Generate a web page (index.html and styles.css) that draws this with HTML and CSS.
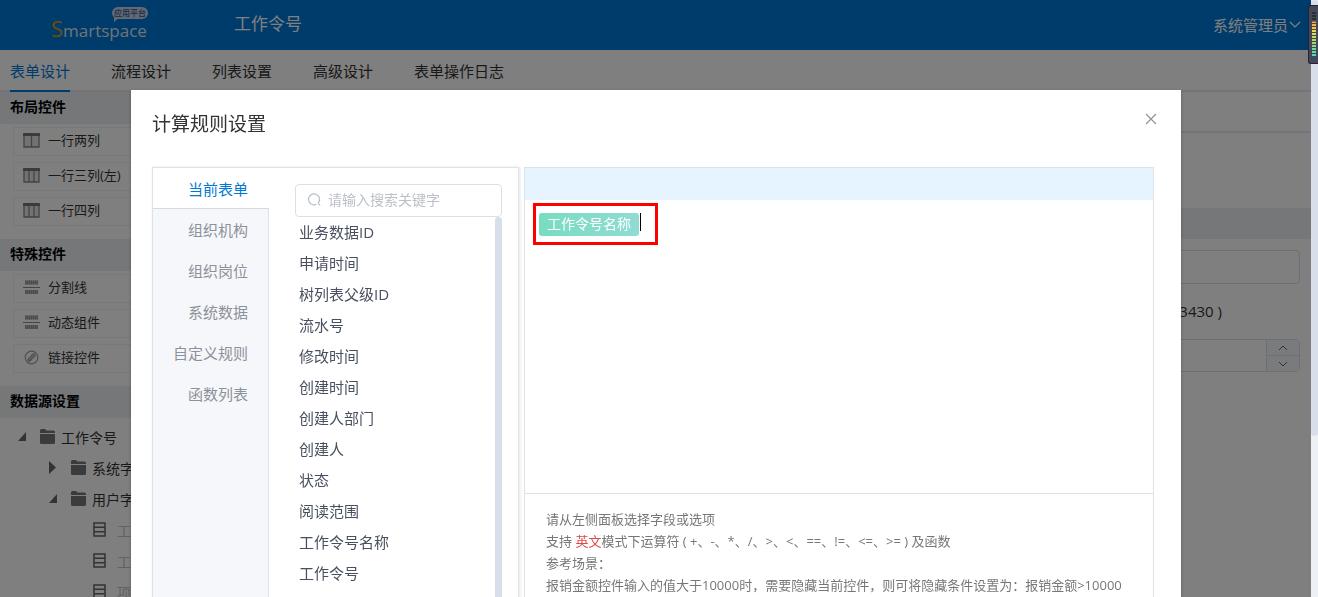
FILE: index.html
```
<!DOCTYPE html>
<html lang="zh-CN">
<head>
    <meta charset="UTF-8" />
    <meta name="viewport" content="width=device-width, initial-scale=1" />
    <title>工作令号</title>
    <link rel="stylesheet" href="styles.css">
</head>
<body>
    <!-- shared icons -->
    <svg width="0" height="0" class="sprite">
        <symbol id="cols2" viewBox="0 0 17 15"><path d="M1 1h15v13H1zM8.500 3v11" fill="#e4e4e4" stroke="#888" stroke-width="1.300"/><path d="M0 1q0-1 1-1h15q1 0 1 1v2H0z" fill="#777"/></symbol>
        <symbol id="cols3" viewBox="0 0 17 15"><path d="M1 1h15v13H1zM6 3v11M11 3v11" fill="#e4e4e4" stroke="#888" stroke-width="1.300"/><path d="M0 1q0-1 1-1h15q1 0 1 1v2H0z" fill="#777"/></symbol>
        <symbol id="split" viewBox="0 0 17 15"><path d="M2 2.500h13M2 12h13" stroke="#b0b0b0" stroke-width="4"/><path d="M2 2.500h13M2 12h13" stroke="#989898" stroke-width="4" stroke-dasharray="1 1"/><path d="M0 7.500h17" stroke="#888" stroke-width="1"/></symbol>
        <symbol id="link" viewBox="0 0 17 15"><circle cx="8.500" cy="7.500" r="6.300" fill="none" stroke="#a2a2a2" stroke-width="1.200"/><path d="M6.300 9.800l1.200-1.200M9.500 6.500l1.200-1.200" stroke="#a2a2a2" stroke-width="4" stroke-linecap="round"/><path d="M6 10l5-5" stroke="#d8d8d8" stroke-width="1"/></symbol>
        <symbol id="folder" viewBox="0 0 15 15"><path d="M0 1.500Q0 0 1.500 0H5l1.500 1.500h7Q15 1.500 15 3v1H0z" fill="#777"/><path d="M0 5h15v8.500q0 1.500-1.500 1.500h-12Q0 15 0 13.500z" fill="#777"/></symbol>
        <symbol id="open" viewBox="0 0 8 9"><path d="M8 0v9H0z" fill="#666"/></symbol>
        <symbol id="closed" viewBox="0 0 8 13"><path d="M0 0l7 6.500L0 13z" fill="#666"/></symbol>
        <symbol id="field" viewBox="0 0 13 15"><path d="M1 1h11v13H1zM1 5.300h11M1 9.700h11" fill="none" stroke="#666" stroke-width="1.500"/></symbol>
    </svg>

    <div class="page">
        <header class="topbar">
            <div class="logo"><span class="logo-s">S</span>martspace<span class="logo-tag">应用平台</span></div>
            <div class="app-name">工作令号</div>
            <button type="button" class="user">系统管理员<svg width="12" height="7" viewBox="0 0 12 7"><path d="M1 1l5 5 5-5" fill="none" stroke="currentColor" stroke-width="1.200"/></svg></button>
        </header>
        <nav class="tabs">
            <a href="#form" class="active">表单设计</a>
            <a href="#flow">流程设计</a>
            <a href="#list">列表设置</a>
            <a href="#advanced">高级设计</a>
            <a href="#log">表单操作日志</a>
        </nav>
        <div class="workspace">
            <aside class="sidebar">
                <h2>布局控件</h2>
                <ul class="widgets">
                    <li><svg><use href="#cols2"/></svg>一行两列</li>
                    <li><svg><use href="#cols3"/></svg>一行三列(左)</li>
                    <li><svg><use href="#cols3"/></svg>一行四列</li>
                </ul>
                <h2>特殊控件</h2>
                <ul class="widgets">
                    <li><svg><use href="#split"/></svg>分割线</li>
                    <li><svg><use href="#split"/></svg>动态组件</li>
                    <li><svg><use href="#link"/></svg>链接控件</li>
                </ul>
                <h2>数据源设置</h2>
                <ul class="tree">
                    <li><svg class="arrow"><use href="#open"/></svg><svg class="folder"><use href="#folder"/></svg>工作令号</li>
                    <li class="level2"><svg class="arrow tall"><use href="#closed"/></svg><svg class="folder"><use href="#folder"/></svg>系统字段</li>
                    <li class="level2"><svg class="arrow"><use href="#open"/></svg><svg class="folder"><use href="#folder"/></svg>用户字段</li>
                    <li class="level3"><svg class="field"><use href="#field"/></svg>工作令号</li>
                    <li class="level3"><svg class="field"><use href="#field"/></svg>工作令号名称</li>
                    <li class="level3"><svg class="field"><use href="#field"/></svg>项目</li>
                </ul>
            </aside>
            <main class="props">
                <div class="props-bar"></div>
                <div class="props-title"></div>
                <div class="props-body">
                    <input type="text" class="prop-input" aria-label="名称">
                    <p class="prop-note">3430 )</p>
                    <div class="stepper">
                        <input type="text" aria-label="数值">
                        <div class="stepper-btns">
                            <button type="button" aria-label="增加"><svg width="10" height="6" viewBox="0 0 10 6"><path d="M1 5l4-4 4 4" fill="none" stroke="currentColor"/></svg></button>
                            <button type="button" aria-label="减少"><svg width="10" height="6" viewBox="0 0 10 6"><path d="M1 1l4 4 4-4" fill="none" stroke="currentColor"/></svg></button>
                        </div>
                    </div>
                </div>
            </main>
        </div>
    </div>

    <div class="mask">
        <section class="dialog" role="dialog" aria-labelledby="dialogTitle">
            <div class="dialog-head">
                <h1 id="dialogTitle">计算规则设置</h1>
                <button type="button" class="close" aria-label="关闭"><svg width="12" height="12" viewBox="0 0 12 12"><path d="M1 1l10 10M11 1L1 11" fill="none" stroke="currentColor" stroke-width="1.200"/></svg></button>
            </div>
            <div class="dialog-body">
                <div class="source">
                    <div class="source-tabs">
                        <button type="button" class="active">当前表单</button>
                        <button type="button">组织机构</button>
                        <button type="button">组织岗位</button>
                        <button type="button">系统数据</button>
                        <button type="button">自定义规则</button>
                        <button type="button">函数列表</button>
                    </div>
                    <div class="source-pane">
                        <label class="search">
                            <svg width="15" height="15" viewBox="0 0 15 15"><path d="M9.500 12.300A5.500 5.500 0 1 1 11.200 11l2 2.500" fill="none" stroke="#b4bac4" stroke-width="1.100"/></svg>
                            <input type="text" placeholder="请输入搜索关键字" aria-label="搜索">
                        </label>
                        <div class="field-box">
                            <ul class="fields">
                                <li>业务数据ID</li>
                                <li>申请时间</li>
                                <li>树列表父级ID</li>
                                <li>流水号</li>
                                <li>修改时间</li>
                                <li>创建时间</li>
                                <li>创建人部门</li>
                                <li>创建人</li>
                                <li>状态</li>
                                <li>阅读范围</li>
                                <li>工作令号名称</li>
                                <li>工作令号</li>
                            </ul>
                            <div class="field-scroll"></div>
                        </div>
                    </div>
                </div>
                <div class="rule">
                    <div class="rule-bar"></div>
                    <div class="editor">
                        <div class="highlight"><span class="chip">工作令号名称</span><span class="caret"></span></div>
                    </div>
                    <div class="hint">
                        <p>请从左侧面板选择字段或选项</p>
                        <p>支持 <em>英文</em>模式下运算符 ( +、-、*、/、&gt;、&lt;、==、!=、&lt;=、&gt;= ) 及函数</p>
                        <p>参考场景：</p>
                        <p>报销金额控件输入的值大于10000时，需要隐藏当前控件，则可将隐藏条件设置为：报销金额&gt;10000</p>
                    </div>
                </div>
            </div>
        </section>
    </div>

    <div class="rail"><div class="rail-thumb"></div></div>
    <div class="meter"><div class="meter-bars"></div></div>
</body>
</html>
```
FILE: styles.css
```
* {
    box-sizing: border-box;
}
body {
    margin: 0;
    height: 100vh;
    overflow: hidden;
    background: #fff;
    font-family: "Open Sans", "Noto Sans CJK SC", sans-serif;
    font-size: 14px;
    color: #333;
}
h1, h2, p, ul {
    margin: 0;
    padding: 0;
}
ul {
    list-style: none;
}
button, input {
    font: inherit;
    color: inherit;
    background: none;
    border: none;
    padding: 0;
    outline: none;
}
svg {
    flex: none;
}
.sprite {
    position: absolute;
}

/* page behind the dialog */
.page {
    margin-right: 7px;
}
.topbar {
    display: flex;
    align-items: center;
    height: 50px;
    padding: 0 10px 0 51px;
    background: #0078d7;
    color: #fff;
}
.logo {
    position: relative;
    width: 183px;
    padding-top: 8px;
    font-size: 17px;
    font-weight: 500;
    line-height: 26px;
    color: #dde6f2;
}
.logo-s {
    color: #d89a10;
    font-size: 22px;
}
.logo-tag {
    position: absolute;
    top: 0;
    left: 61px;
    padding: 0 2px;
    border-radius: 6px;
    background: #c8d2e2;
    color: #2a5c9c;
    font-size: 8px;
    line-height: 12px;
    white-space: nowrap;
}
.logo-tag::after {
    content: "";
    position: absolute;
    left: 2px;
    top: 10px;
    border-top: 5px solid #c8d2e2;
    border-right: 6px solid transparent;
}
.app-name {
    flex: 1;
    font-size: 17px;
    line-height: 24px;
    padding-bottom: 2px;
}
.user {
    display: flex;
    align-items: center;
    gap: 1px;
    padding-bottom: 2px;
    font-size: 15px;
}
.tabs {
    display: flex;
    gap: 41px;
    height: 42px;
    padding: 0 10px;
    border-bottom: 2px solid #e8eaf2;
}
.tabs a {
    height: 42px;
    font-size: 15px;
    line-height: 42px;
    color: #333;
    text-decoration: none;
}
.tabs a.active {
    color: #0078d7;
    border-bottom: 2px solid #0078d7;
}
.workspace {
    display: flex;
}
.sidebar {
    width: 262px;
}
.sidebar h2 {
    height: 32px;
    padding-left: 10px;
    background: #ebeff3;
    color: #000;
    font-size: 14px;
    line-height: 30px;
}
.widgets {
    display: grid;
    gap: 6px;
    padding: 3px 10px 13px 13px;
}
.widgets li {
    display: flex;
    align-items: center;
    gap: 8px;
    height: 29px;
    padding-left: 9px;
    border: 1px solid #f0f0f0;
    font-size: 13px;
    line-height: 25px;
    padding-bottom: 2px;
}
.widgets svg {
    width: 17px;
    height: 15px;
}
.tree {
    padding-top: 3px;
}
.tree li {
    display: flex;
    align-items: center;
    height: 31px;
    padding-left: 18px;
    white-space: nowrap;
}
.tree .level2 {
    padding-left: 49px;
}
.tree .level3 {
    padding-left: 93px;
    color: #c4c4c4;
}
.arrow {
    width: 8px;
    height: 9px;
    margin-right: 14px;
}
.tall {
    height: 13px;
}
.folder {
    width: 15px;
    height: 15px;
    margin-right: 6px;
}
.field {
    width: 13px;
    height: 15px;
    margin-right: 11px;
}
.props {
    flex: 1;
}
.props-bar {
    height: 41px;
    border-bottom: 2px solid #e8eaf2;
}
.props-title {
    height: 31px;
    margin-top: 75px;
    background: #ebeff3;
}
.props-body {
    padding: 11px;
}
.prop-input {
    display: block;
    width: 100%;
    height: 34px;
    border: 1px solid #dcdfe6;
    border-radius: 4px;
}
.prop-note {
    padding-right: 78px;
    font-size: 15px;
    line-height: 55px;
    text-align: right;
}
.stepper {
    display: flex;
    height: 33px;
    border: 1px solid #dcdfe6;
    border-radius: 4px;
}
.stepper input {
    flex: 1;
}
.stepper-btns {
    display: flex;
    flex-direction: column;
    width: 33px;
    border-left: 1px solid #dcdfe6;
    background: #f5f7fa;
    color: #606266;
}
.stepper-btns button {
    display: flex;
    flex: 1;
    align-items: center;
    justify-content: center;
}
.stepper-btns button + button {
    border-top: 1px solid #dcdfe6;
}

/* dialog */
.mask {
    position: fixed;
    top: 0;
    bottom: 0;
    left: 0;
    right: 7px;
    overflow: hidden;
    background: rgba(0, 0, 0, 0.5);
}
.dialog {
    margin: 90px 130px 0 131px;
    padding: 20px 27px 40px 21px;
    background: #fff;
    box-shadow: 0 1px 3px rgba(0, 0, 0, 0.3);
}
.dialog-head {
    display: flex;
    justify-content: space-between;
    align-items: flex-start;
    height: 57px;
}
.dialog-head h1 {
    font-size: 19px;
    font-weight: normal;
    line-height: 28px;
}
.close {
    display: flex;
    padding: 3px 0;
    margin-right: -3px;
    color: #909399;
}
.dialog-body {
    display: flex;
    gap: 5px;
}
.source {
    display: flex;
    width: 367px;
    border: 1px solid #dfe3e8;
    box-shadow: 1px 0 3px rgba(0, 0, 0, 0.1);
}
.source-tabs {
    width: 116px;
    border-right: 1px solid #dde3ea;
    background: #f5f7fb;
}
.source-tabs button {
    display: block;
    width: 115px;
    height: 41px;
    padding-right: 20px;
    color: #8d9199;
    font-size: 15px;
    text-align: right;
}
.source-tabs .active {
    width: 116px;
    padding-right: 21px;
    border-bottom: 1px solid #d3dce6;
    background: #fff;
    color: #0078d7;
}
.source-pane {
    display: flex;
    flex: 1;
    flex-direction: column;
    padding: 16px 16px 0 26px;
}
.search {
    display: flex;
    align-items: center;
    gap: 6px;
    height: 33px;
    padding: 0 11px 2px;
    border: 1px solid #dcdfe6;
    border-radius: 4px;
}
.search input {
    width: 100%;
}
.search input::placeholder {
    color: #bbc0c9;
}
.field-box {
    display: flex;
    flex: 1;
}
.fields {
    flex: 1;
    padding-left: 4px;
    color: #48505f;
    font-size: 15px;
    line-height: 31px;
}
.field-scroll {
    width: 7px;
    border-radius: 4px;
    background: #d8dfea;
}
.rule {
    flex: 1;
    border: 1px solid #dfe3e8;
}
.rule-bar {
    height: 32px;
    background: #e6f4ff;
}
.editor {
    height: 294px;
    padding: 3px 8px;
    border-bottom: 1px solid #dfe3e8;
}
.highlight {
    display: inline-flex;
    gap: 1px;
    padding: 7px 14px 6px 3px;
    border: 3px solid #f00;
}
.chip {
    padding: 0 8px 1px;
    border-radius: 3px;
    background: linear-gradient(90deg, #78dcc0, #90dcd4);
    color: #fff;
    line-height: 22px;
}
.caret {
    width: 1px;
    height: 18px;
    background: #000;
}
.hint {
    padding: 14px 21px;
    color: #777;
    font-size: 13px;
    line-height: 22px;
}
.hint em {
    color: #e04848;
    font-style: normal;
}

/* page scrollbar and level meter at the window edge */
.rail {
    position: fixed;
    top: 0;
    bottom: 0;
    right: 0;
    width: 7px;
    background: #edf0f5;
}
.rail-thumb {
    height: 73%;
    border-radius: 4px;
    background: #d8dfea;
}
.meter {
    position: fixed;
    top: 5px;
    right: 0;
    width: 10px;
    height: 59px;
    padding: 6px 2px 6px 3px;
    border: 1px solid #22242f;
    border-right: none;
    border-radius: 3px 0 0 3px;
    background: #454859;
}
.meter-bars {
    height: 45px;
    background:
        repeating-linear-gradient(transparent 0 2px, #454859 2px 3px),
        linear-gradient(#2a2c38 0 9px, #f5a840 10px, #e8dc50 20px, #9cdc68 30px, #40dcc8 45px);
}
```
